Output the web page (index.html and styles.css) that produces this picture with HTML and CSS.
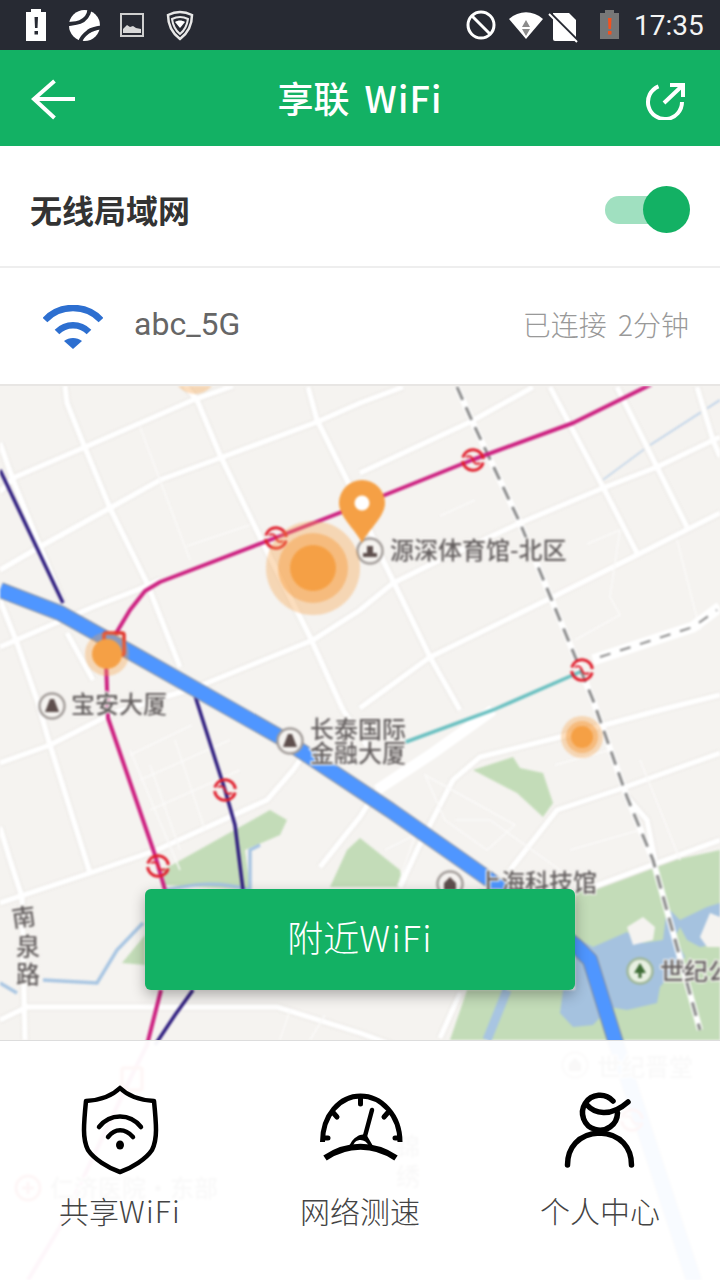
FILE: index.html
```html
<!DOCTYPE html>
<html lang="zh">
<head>
<meta charset="utf-8">
<title>享联 WiFi</title>
<link rel="stylesheet" href="styles.css">
</head>
<body>
<div class="page">
  <div class="statusbar">
    <div class="status-group">
      <svg class="st-icon" width="200" height="50" viewBox="0 0 200 50">
        <path class="fill-white" d="M31 9h10v3h5v29H26V12h5z"/>
        <path class="fill-dark" d="M34.500 17h3.500l-.5 11h-2.500zM34.500 31h3.500v3.500h-3.500z"/>
        <circle class="fill-white" cx="84.500" cy="25.500" r="15.500"/>
        <path class="line-swirl" d="M89.500 9.500C89 15 85 20 80 22 76 23.500 72 23.500 68 24M101 27.500C97 28 92 29 88.500 31.500 84 35 81 38 80.500 41.500"/>
        <rect class="line-gray" x="121" y="14" width="22" height="22"/>
        <path class="fill-gray" d="M123 33v-4l4-4 3 2 3-1 3 2 5 1v4z"/>
        <path class="line-white" d="M168 15c8-4 16-4 24 0 0 10-4 18-12 24-8-6-12-14-12-24z"/>
        <path class="line-white-thin" d="M172 19c5-2.500 11-2.500 16 0-1 7-3 11-8 15-5-4-7-8-8-15z"/>
        <path class="fill-white" d="M175 22c3-2 7-2 10 0l-5 6z"/>
      </svg>
    </div>
    <div class="status-group">
      <svg class="st-icon" width="170" height="50" viewBox="450 0 170 50">
        <circle class="line-stat" cx="481" cy="25" r="13"/>
        <path class="line-stat" d="M472 16l18 18"/>
        <path class="fill-white" d="M509 19c10-9 24-9 34 0l-17 20z"/>
        <path class="fill-mid" d="M526 20l4 7h-8zM522 29h8l-4 7z"/>
        <path class="fill-white" d="M553 13h16l7 7v19a2 2 0 0 1-2 2h-19a2 2 0 0 1-2-2z"/>
        <path class="line-slash" d="M550 13l28 28"/>
        <path class="line-slash-w" d="M549 14l28 28"/>
        <path class="fill-batt" d="M605 10h9v3h5v26h-19V13h5z"/>
        <path class="fill-alert" d="M608 18h3.500l-.5 11h-2.500zM608 31h3.500v3.500H608z"/>
      </svg>
      <span class="clock">17:35</span>
    </div>
  </div>

  <header class="appbar">
    <svg class="bar-icon" width="44" height="44" viewBox="0 0 44 44">
      <path class="line-bar" d="M44 23H3M23.500 5 3 23l20.500 19"/>
    </svg>
    <h1 class="title">享联 <span class="latin">WiFi</span></h1>
    <svg class="bar-icon" width="44" height="44" viewBox="0 0 44 44">
      <path class="line-bar" d="M13.500 10.300A17 17 0 1 0 37 26M19 27 38 9M25 9h13v12"/>
    </svg>
  </header>

  <section class="row row-switch">
    <span class="row-title">无线局域网</span>
    <span class="toggle"><span class="knob"></span></span>
  </section>

  <section class="row row-wifi">
    <svg class="wifi-icon" width="60" height="44" viewBox="0 0 60 44">
      <path class="line-wifi" d="M2 15C17 -1 43 -1 58 15M14 27c9-9 23-9 32 0"/>
      <path class="fill-wifi" d="M21 36c5-4 13-4 18 0L30 44z"/>
    </svg>
    <span class="ssid">abc_5G</span>
    <span class="conn">已连接 2分钟</span>
  </section>

  <main class="map">
    <svg class="map-art" width="720" height="894" viewBox="0 386 720 894">
      <defs>
        <g id="roads">
          <path d="M0 492 13 478 83 448 193 400 233 386"/>
          <path d="M0 570 43 545 110 508 160 480 220 458 317 422 360 403 403 387"/>
          <path d="M360 473 470 422 533 387"/>
          <path d="M197 687 313 640 360 610 393 583 440 560 520 523 603 488 657 467 720 437"/>
          <path d="M360 708 430 657 553 597 633 557 720 513"/>
          <path d="M0 647 93 607 137 590 160 580"/>
          <path d="M65 386 67 403 83 443 110 508 147 583 180 667"/>
          <path d="M185 386 197 400 220 455 260 537 310 637 343 710"/>
          <path d="M308 387 317 420 347 480 383 560 430 657 460 710"/>
          <path d="M0 443 13 480 63 603"/>
          <path d="M0 600 17 643 37 700 50 745 90 873"/>
          <path d="M67 633 93 680"/>
          <path d="M550 387 603 487 637 553"/>
          <path d="M617 387 657 467 687 527"/>
          <path d="M697 387 713 440 720 457"/>
          <path d="M0 763 50 745 113 713 197 687"/>
          <path d="M0 903 90 873 157 850 267 800 293 770 300 760"/>
          <path d="M0 827 10 860 22 897 25 1040"/>
          <path d="M0 1020 27 1007 277 1007 360 1033 420 1055"/>
          <path d="M320 867 347 833 360 817 377 790"/>
          <path d="M400 887 417 850 453 780 480 757 560 737 660 710 720 695"/>
          <path d="M510 870 557 810 617 790 720 753"/>
          <path d="M590 888 660 862 720 840"/>
          <path d="M627 797 647 820 655 860"/>
          <path d="M440 1038 460 993"/>
          <path d="M343 710 370 750"/>
        </g>
        <g id="metro-mark">
          <path d="M-10.200 -2.500A10.500 10.500 0 0 1 10.400 -1M10.200 2.500A10.500 10.500 0 0 1 -10.400 1"/>
          <path class="station-s" d="M-7 -3C-3 -5 -1 -3 0 0S3 5 7 3"/>
        </g>
      </defs>

      <path class="park" d="M450 1040 467 990H575V890L593 887 660 863 720 850V1040z"/>
      <path class="park" d="M473 770 513 757 520 768 543 773 553 803 543 817 517 793z"/>
      <path class="park" d="M163 870 270 810 287 820 280 835 245 850 250 890 165 885z"/>
      <path class="park" d="M330 887 347 850 360 838 400 870 403 887z"/>
      <path class="park" d="M122 963 145 935V965z"/>
      <path class="water" d="M575 937 593 947 627 932 643 943 663 940 667 907 680 920 707 907 720 903V943L700 947 687 940 680 927 675 937 685 957 660 987 657 1003 627 1010 610 1007 593 1025 573 1027 560 1013 563 990 575 990z"/>
      <path class="sand" d="M627 927 643 917 655 927 653 940 633 945z"/>
      <path class="sand" d="M700 937 710 913 720 917V947H707z"/>
      <path class="river" d="M43 980 97 983 117 950 143 923"/>
      <path class="river" d="M0 983 17 993"/>
      <path class="river" d="M165 890C190 885 215 880 250 890M250 890 250 850 260 845"/>
      <path class="river river-wide" d="M487 1040 507 990"/>
      <path class="thin-blue" d="M720 400 650 445 600 482"/>

      <use href="#roads" class="casing"/>
      <use href="#roads" class="road"/>

      <g class="minor">
        <path d="M140 427 190 560M187 546 250 525"/>
        <path d="M440 516 475 500M587 544 620 530 610 597 620 615 575 640M677 540 700 630"/>
        <path d="M130 755 192 725M150 765 180 850M130 750 180 870M175 740 205 830M140 780 230 740M150 810 240 770"/>
        <path d="M455 820 490 820 560 870"/>
        <path d="M640 760 680 860M555 765 610 750M570 850 640 830"/>
        <path d="M425 775 515 825 487 850 445 820z"/>
        <path d="M385 850 415 835 400 880"/>
        <path d="M280 1040 290 1010M310 1040 325 1015"/>
      </g>

      <path class="wide-road" d="M377 790 433 753 493 710"/>
      <path class="wide-road" d="M593 660 693 627 720 607"/>

      <path class="rail-bg" d="M457 387 473 423 520 523 593 700 627 797 653 860 700 1030"/>
      <path class="rail" d="M457 387 473 423 520 523 593 700 627 797 653 860 700 1030"/>
      <path class="rail rail-light" d="M600 657 693 627 717 610"/>

      <path class="metro-blue" d="M0 470 63 603"/>
      <path class="metro-blue" d="M190 680 225 790 235 825 243 890"/>
      <path class="metro-blue" d="M193 990 175 1015 155 1045"/>
      <path class="metro-pink" d="M115 635 130 610 145 591 160 582 275 538 360 505 472 460 573 423 660 380"/>
      <path class="metro-pink" d="M106 660 108 718 155 855 165 890"/>
      <path class="metro-pink" d="M161 990 147 1045 133 1073 60 1227 28 1280"/>
      <path class="metro-cyan" d="M403 743 493 710 580 672"/>

      <path class="route-edge" d="M0 590 60 613 130 652 280 737 390 810 490 880 575 945 590 960 615 1040 720 1360"/>
      <path class="route" d="M0 590 60 613 130 652 280 737 390 810 490 880 575 945 590 960 615 1040 720 1360"/>

      <use href="#metro-mark" class="station" x="473" y="460"/>
      <use href="#metro-mark" class="station" x="276" y="538"/>
      <use href="#metro-mark" class="station" x="582" y="670"/>
      <use href="#metro-mark" class="station" x="225" y="790"/>
      <use href="#metro-mark" class="station" x="158" y="866"/>
      <use href="#metro-mark" class="station" x="632" y="1120"/>
      <rect class="station-sq" x="104" y="633" width="20" height="22" rx="2"/>
      <rect class="station-sq" x="122" y="1068" width="20" height="22" rx="2"/>

      <g class="poi" transform="translate(370 551)"><circle r="12.500"/><path d="M-7 6H7V2H3V-5H-3V2H-7z"/></g>
      <g class="poi" transform="translate(52 706)"><circle r="12.500"/><path d="M-7 6H7L2 -7H-2z"/></g>
      <g class="poi" transform="translate(290 741)"><circle r="12.500"/><path d="M-7 6H7L2 -7H-2z"/></g>
      <g class="poi" transform="translate(450 884)"><circle r="12.500"/><path d="M-6 6H6V-1L0 -7-6 -1z"/></g>
      <g class="poi poi-green" transform="translate(640 971)"><circle r="12.500"/><path d="M-1.500 7V2H-6L0 -8 6 2H1.500V7z"/></g>
      <g class="poi" transform="translate(575 1065)"><circle r="12.500"/><path d="M-6 6H6V-1L0 -7-6 -1z"/></g>
      <g class="station" transform="translate(28 1188)"><circle r="12"/><path d="M-6 0H6M0 -6V6"/></g>

      <text class="label" x="390" y="559">源深体育馆-北区</text>
      <text class="label" x="71" y="713">宝安大厦</text>
      <text class="label" x="310" y="738">长泰国际</text>
      <text class="label" x="310" y="762">金融大厦</text>
      <text class="label" x="477" y="891">上海科技馆</text>
      <text class="label" x="660" y="980">世纪公园</text>
      <text class="label" x="12" y="926" transform="rotate(-8 24 920)">南</text>
      <text class="label" x="16" y="955">泉</text>
      <text class="label" x="16" y="983">路</text>
      <text class="label" x="597" y="1076">世纪晋堂</text>
      <text class="label" x="50" y="1197">仁济医院·东部</text>
      <text class="label" x="396" y="1155">锦</text>
      <text class="label" x="396" y="1185">绣</text>

      <circle class="heat-a" cx="195" cy="372" r="22"/>
      <circle class="heat-a" cx="313" cy="568" r="47"/>
      <circle class="heat-b" cx="313" cy="568" r="35"/>
      <circle class="heat-c" cx="313" cy="568" r="23"/>
      <circle class="heat-a" cx="107" cy="654" r="22"/>
      <circle class="heat-c" cx="107" cy="654" r="15"/>
      <circle class="heat-a" cx="582" cy="737" r="21"/>
      <circle class="heat-b" cx="582" cy="737" r="16"/>
      <circle class="heat-c" cx="582" cy="737" r="11"/>
      <path class="heat-c" d="M362 543C356 530 339 517 339 503A23 23 0 0 1 385 503C385 517 368 530 362 543z"/>
      <circle class="pin-dot" cx="362" cy="503" r="7.500"/>
    </svg>

    <button class="nearby">附近<span class="latin">WiFi</span></button>

    <nav class="tabs">
      <a class="tab">
        <svg class="tab-icon" width="100" height="92" viewBox="70 1085 100 92">
          <path class="line-tab" d="M120 1088c-8 8-18 12-34 13-1 10-2 20-2 29 0 8 1 14 4 20 6 9 20 18 32 22 12-4 26-13 32-22 3-6 4-12 4-20 0-9-1-19-2-29-16-1-26-5-34-13z"/>
          <path class="line-tab" d="M99 1127c11-14 31-14 42 0M108 1137c7-9 17-9 25 0"/>
          <ellipse class="fill-tab" cx="120" cy="1145" rx="4" ry="4.500"/>
        </svg>
        <span class="tab-label">共享<span class="latin">WiFi</span></span>
      </a>
      <a class="tab">
        <svg class="tab-icon" width="100" height="92" viewBox="310 1085 100 92">
          <path class="line-tab5" d="M322.500 1142C322.500 1115 340 1096 360.500 1096S400 1115 400 1142"/>
          <path class="line-tab-r" d="M360.500 1098V1104M333.500 1113 337 1117M387.500 1113 384 1117M325 1138H328M398 1138H395"/>
          <path class="line-tab-n" d="M372 1110 365 1136"/>
          <path class="fill-tab" d="M349 1147C351 1141 355 1137 360 1135L366 1134 373 1146 369 1146C367 1142 364 1140 360.500 1140 357 1140 354 1142 353 1146z"/>
          <path class="line-tab-b" d="M325 1158C347 1143 374 1143 396 1158"/>
        </svg>
        <span class="tab-label">网络测速</span>
      </a>
      <a class="tab">
        <svg class="tab-icon" width="100" height="92" viewBox="550 1085 100 92">
          <path class="line-person" d="M613 1101A17.500 17.500 0 1 0 617.500 1113"/>
          <path class="line-person" d="M587 1105C594 1113 610 1118 628 1102"/>
          <path class="line-person" d="M567.500 1165C567.500 1148 578 1134 599.500 1133 621 1134 631.500 1148 631.500 1165"/>
        </svg>
        <span class="tab-label">个人中心</span>
      </a>
    </nav>
  </main>
</div>
</body>
</html>
```
FILE: styles.css
```css
* { box-sizing: border-box; }
html, body { margin: 0; padding: 0; }
body { font-family: "Noto Sans CJK SC", "Noto Sans", sans-serif; background: #fff; }
.page { width: 720px; height: 1280px; display: flex; flex-direction: column; overflow: hidden; }

.statusbar { height: 50px; flex: none; background: #272a33; display: flex; justify-content: space-between; }
.status-group { display: flex; align-items: center; }
.st-icon { display: block; }
.clock { font-family: Roboto, sans-serif; font-size: 28px; color: #f4f4f4; width: 100px; padding-left: 14px; letter-spacing: 0; }
.fill-white { fill: #fff; }
.fill-dark { fill: #272a33; }
.fill-gray { fill: #d8d8d8; }
.fill-mid { fill: #8b8b8b; }
.fill-batt { fill: #777; }
.fill-alert { fill: #f4511e; }
.line-gray { fill: none; stroke: #cfcfcf; stroke-width: 2; }
.line-white { fill: none; stroke: #e8e8e8; stroke-width: 2.500; }
.line-white-thin { fill: none; stroke: #e8e8e8; stroke-width: 2; }
.line-stat { fill: none; stroke: #fff; stroke-width: 3; }
.line-slash { fill: none; stroke: #272a33; stroke-width: 3; }
.line-slash-w { fill: none; stroke: #fff; stroke-width: 2; }
.line-swirl { fill: none; stroke: #272a33; stroke-width: 4; }

.appbar { height: 96px; flex: none; background: #13b164; display: flex; align-items: center; justify-content: space-between; padding: 0 31px; }
.bar-icon { display: block; }
.line-bar { fill: none; stroke: #fff; stroke-width: 4; }
.title { margin: 0 0 2px; font-size: 36px; font-weight: 500; color: #fff; line-height: 1; word-spacing: 7px; }
.latin { letter-spacing: 1.200px; }

.row { flex: none; background: #fff; display: flex; align-items: center; }
.row-switch { height: 122px; padding: 6px 30px 0 30px; justify-content: space-between; border-bottom: 2px solid #eee; }
.row-title { font-size: 32px; font-weight: 700; color: #333; }
.toggle { position: relative; display: block; width: 85px; height: 28px; margin-top: 2px; border-radius: 14px 0 0 14px; background: linear-gradient(90deg, #a0e0c0 65px, transparent 65px); }
.knob { position: absolute; right: 0; top: -10px; width: 47px; height: 47px; border-radius: 50%; background: #13b164; }
.row-wifi { height: 118px; padding: 0 31px 0 43px; border-bottom: 2px solid #e8e6e4; }
.wifi-icon { flex: none; display: block; margin-top: 2px; }
.line-wifi { fill: none; stroke: #2d6fd0; stroke-width: 6.500; }
.fill-wifi { fill: #2d6fd0; }
.ssid { margin-left: 31px; padding-bottom: 4px; font-family: Roboto, sans-serif; font-size: 32px; color: #666; }
.conn { margin-left: auto; padding-bottom: 4px; font-size: 28px; font-weight: 300; color: #999; word-spacing: 5px; }

.map { position: relative; flex: 1; background: #f5f3f0; overflow: hidden; }
.map-art { position: absolute; left: 0; top: 0; display: block; filter: blur(0.9px); }
.park { fill: #c3dcb8; }
.water { fill: #a5c2df; }
.sand { fill: #f5f3f0; }
.river { fill: none; stroke: #a8c5e2; stroke-width: 3.500; }
.river-wide { stroke-width: 9; }
.thin-blue { fill: none; stroke: #b8cfe8; stroke-width: 1.500; }
.casing { fill: none; stroke: #e9e6e2; stroke-width: 7.500; }
.road { fill: none; stroke: #fff; stroke-width: 5.500; }
.minor { fill: none; stroke: #fbfaf9; stroke-width: 1.500; }
.wide-road { fill: none; stroke: #fff; stroke-width: 11; }
.rail-bg { fill: none; stroke: #fff; stroke-width: 6; }
.rail { fill: none; stroke: #8a8a8a; stroke-width: 3; stroke-dasharray: 14 8; }
.rail-light { stroke-width: 2; stroke-dasharray: 11 10; }
.metro-blue { fill: none; stroke: #2d1b7e; stroke-width: 3.500; }
.metro-pink { fill: none; stroke: #cc2080; stroke-width: 4; stroke-linejoin: round; }
.metro-cyan { fill: none; stroke: #68bfc0; stroke-width: 3.500; }
.route-edge { fill: none; stroke: #8b8f99; stroke-width: 16; stroke-linejoin: round; }
.route { fill: none; stroke: #4f96ff; stroke-width: 14; stroke-linejoin: round; }
.station { fill: none; stroke: #e0202e; stroke-width: 3; }
.station-s { stroke-width: 2; }
.station-sq { fill: none; stroke: #e0382e; stroke-width: 3.500; }
.poi { stroke: none; }
.poi circle { fill: #f5f3f0; stroke: #a39d9a; stroke-width: 2.500; }
.poi path { fill: #5e4f4d; }
.poi-green circle { fill: #e8f0e2; stroke: #9fb799; }
.poi-green path { fill: #3d6b35; }
.label { font-size: 24px; font-weight: 500; fill: #656060; stroke: #f5f3f0; stroke-width: 2.500; paint-order: stroke; font-family: "Noto Sans CJK SC", sans-serif; }
.heat-a { fill: #f5a045; fill-opacity: 0.35; }
.heat-b { fill: #f5a045; fill-opacity: 0.5; }
.heat-c { fill: #f5a045; }
.pin-dot { fill: #fff; }

.nearby { position: absolute; left: 145px; top: 503px; width: 430px; height: 101px; border: 0; border-radius: 6px; background: #13b164; color: #fff; font-family: "Noto Sans CJK SC", "Noto Sans", sans-serif; font-size: 36px; font-weight: 300; box-shadow: 0 5px 14px rgba(0, 0, 0, 0.3); padding: 0 0 8px; }

.tabs { position: absolute; left: 0; right: 0; bottom: 0; height: 240px; display: grid; grid-template-columns: repeat(3, 240px); background: rgba(255, 255, 255, 0.96); border-top: 1px solid #ddd; }
.tab { display: flex; flex-direction: column; align-items: center; padding-top: 44px; }
.tab-icon { display: block; }
.tab-label { margin-top: 16px; font-size: 30px; font-weight: 300; color: #444; line-height: 34px; }
.line-tab { fill: none; stroke: #000; stroke-width: 4.500; stroke-linecap: round; stroke-linejoin: round; }
.line-tab5 { fill: none; stroke: #000; stroke-width: 5; }
.line-tab-r { fill: none; stroke: #000; stroke-width: 5; stroke-linecap: round; }
.line-tab-n { fill: none; stroke: #000; stroke-width: 4.500; stroke-linecap: round; }
.line-tab-b { fill: none; stroke: #000; stroke-width: 6; }
.line-person { fill: none; stroke: #000; stroke-width: 5.500; stroke-linecap: round; }
.fill-tab { fill: #000; }
```
